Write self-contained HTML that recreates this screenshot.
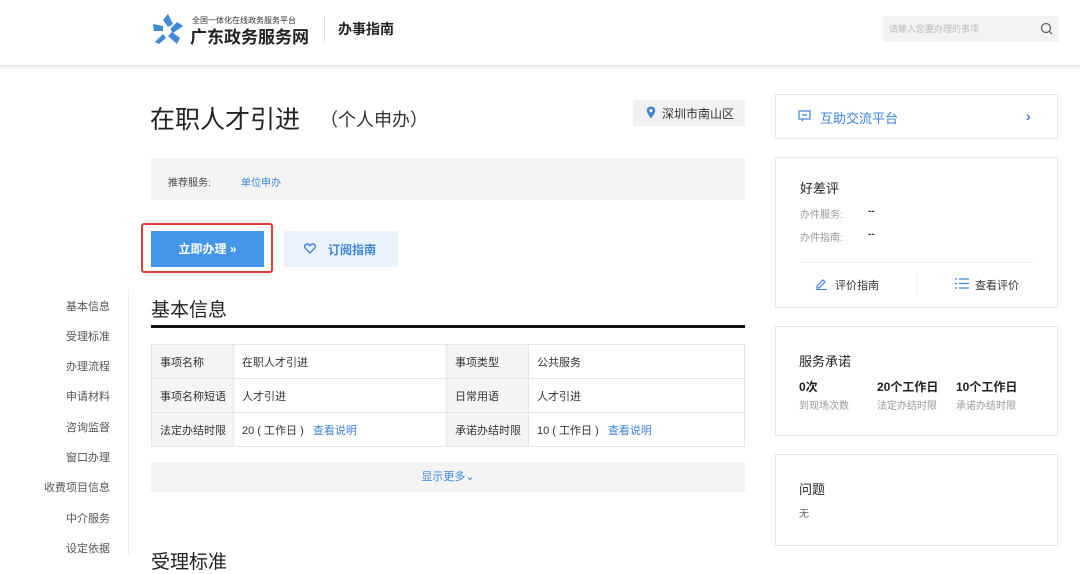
<!DOCTYPE html>
<html><head><meta charset="utf-8"><style>
*{margin:0;padding:0;box-sizing:border-box}
body{width:1080px;height:556px;overflow:hidden;background:#fff;font-family:"Liberation Sans","Noto Sans CJK SC",sans-serif;color:#333;position:relative}
.a{position:absolute;white-space:nowrap}
.hdr{left:0;top:0;width:1080px;height:66px;background:#fff;box-shadow:0 2px 3px rgba(0,0,0,.08);border-bottom:1px solid #e6e6e6}
.nav{font-size:11px;color:#555;right:0;text-align:right;width:80px}
.card{border:1px solid #e8e8e8;background:#fff}
.tbl td{border:1px solid #e6e6e6;font-size:11px;height:34px;padding-left:8px;color:#333}
.tbl td.k{background:#f5f5f5}
.lnk{color:#3d84d8}
</style></head><body>
<div class="a hdr"></div>
<svg class="a" style="left:151px;top:12px" width="34" height="34" viewBox="0 0 34 34">
<g fill="#3d8ad8"><path d="M17 2 L22 12 L17 15 L12 8Z"/><path d="M32 14 L22 21 L19 17 L26 10Z"/><path d="M26 32 L17 24 L21 20 L29 26Z"/><path d="M4 30 L12 22 L15 26 L8 32Z"/><path d="M2 12 L12 14 L12 19 L3 19Z"/></g><circle cx="17" cy="18" r="3" fill="#fff"/></svg>
<div class="a" style="left:192px;top:15px;font-size:8px;color:#333">全国一体化在线政务服务平台</div>
<div class="a" style="left:190px;top:23px;font-size:17px;font-weight:bold;color:#222">广东政务服务网</div>
<div class="a" style="left:324px;top:16px;width:1px;height:26px;background:#e0e0e0"></div>
<div class="a" style="left:338px;top:19px;font-size:14px;font-weight:bold;color:#222">办事指南</div>
<div class="a" style="left:883px;top:16px;width:176px;height:26px;background:#f3f3f3"></div>
<div class="a" style="left:889px;top:22px;font-size:9px;color:#bbb">请输入您要办理的事项</div>
<svg class="a" style="left:1040px;top:22px" width="14" height="14"><circle cx="6" cy="6" r="4.5" fill="none" stroke="#666" stroke-width="1.3"/><path d="M9.5 9.5L12 12" stroke="#666" stroke-width="1.3"/></svg>

<div class="a" style="left:128px;top:290px;width:1px;height:266px;background:#eee"></div>
<div class="a nav" style="top:298px;left:30px">基本信息</div>
<div class="a nav" style="top:328px;left:30px">受理标准</div>
<div class="a nav" style="top:358px;left:30px">办理流程</div>
<div class="a nav" style="top:388px;left:30px">申请材料</div>
<div class="a nav" style="top:419px;left:30px">咨询监督</div>
<div class="a nav" style="top:449px;left:30px">窗口办理</div>
<div class="a nav" style="top:479px;left:30px">收费项目信息</div>
<div class="a nav" style="top:510px;left:30px">中介服务</div>
<div class="a nav" style="top:540px;left:30px">设定依据</div>

<div class="a" style="left:150px;top:100px;font-size:25px;color:#222">在职人才引进</div>
<div class="a" style="left:320px;top:106px;font-size:18px;color:#333">（个人申办）</div>
<div class="a" style="left:633px;top:100px;width:112px;height:26px;background:#f0f1f3"></div>
<svg class="a" style="left:646px;top:106px" width="10" height="13"><path d="M5 0.5C2.5 0.5 0.8 2.3 0.8 4.6 0.8 7.5 5 12.5 5 12.5S9.2 7.5 9.2 4.6C9.2 2.3 7.5 0.5 5 0.5Z" fill="#3d84d8"/><circle cx="5" cy="4.6" r="1.6" fill="#fff"/></svg>
<div class="a" style="left:662px;top:105px;font-size:12px;color:#333">深圳市南山区</div>
<div class="a" style="left:151px;top:158px;width:594px;height:42px;background:#f4f4f5"></div>
<div class="a" style="left:168px;top:174px;font-size:10px;color:#444">推荐服务:</div>
<div class="a lnk" style="left:241px;top:174px;font-size:10px">单位申办</div>

<div class="a" style="left:141px;top:223px;width:132px;height:50px;border:2px solid #e03c3c;border-radius:3px"></div>
<div class="a" style="left:151px;top:231px;width:113px;height:36px;background:#4395ea;color:#fff;font-size:12px;font-weight:bold;text-align:center;line-height:36px">立即办理 »</div>
<div class="a" style="left:284px;top:231px;width:114px;height:36px;background:#eaf3fd"></div>
<svg class="a" style="left:304px;top:243px" width="12" height="11"><path d="M6 10L1.3 5.2C0 3.8 0.8 1 3.2 1 4.5 1 5.4 1.8 6 2.7 6.6 1.8 7.5 1 8.8 1 11.2 1 12 3.8 10.7 5.2Z" fill="none" stroke="#3d84d8" stroke-width="1.4"/></svg>
<div class="a lnk" style="left:328px;top:241px;font-size:12px;font-weight:bold">订阅指南</div>

<div class="a" style="left:151px;top:295px;font-size:19px;color:#222">基本信息</div>
<div class="a" style="left:151px;top:325px;width:594px;height:3px;background:#111"></div>
<table class="a tbl" style="left:151px;top:344px;width:594px;border-collapse:collapse">
<tr><td class="k" style="width:82px">事项名称</td><td style="width:213px">在职人才引进</td><td class="k" style="width:82px">事项类型</td><td>公共服务</td></tr>
<tr><td class="k">事项名称短语</td><td>人才引进</td><td class="k">日常用语</td><td>人才引进</td></tr>
<tr><td class="k">法定办结时限</td><td>20 ( 工作日 ) &nbsp;&nbsp;<span class="lnk">查看说明</span></td><td class="k">承诺办结时限</td><td>10 ( 工作日 ) &nbsp;&nbsp;<span class="lnk">查看说明</span></td></tr>
</table>
<div class="a" style="left:151px;top:462px;width:594px;height:30px;background:#f4f4f5;text-align:center;line-height:30px;font-size:11px" ><span class="lnk">显示更多⌄</span></div>
<div class="a" style="left:151px;top:547px;font-size:19px;color:#222">受理标准</div>

<div class="a card" style="left:775px;top:94px;width:283px;height:45px"></div>
<svg class="a" style="left:798px;top:110px" width="13" height="12"><rect x="1" y="1" width="11" height="8" fill="none" stroke="#3d84d8" stroke-width="1.2"/><path d="M4 5h5M5 9l-1 2" stroke="#3d84d8" stroke-width="1.2"/></svg>
<div class="a lnk" style="left:820px;top:108px;font-size:13px">互助交流平台</div>
<div class="a lnk" style="left:1026px;top:108px;font-size:14px;font-weight:bold">›</div>

<div class="a card" style="left:775px;top:157px;width:283px;height:151px"></div>
<div class="a" style="left:800px;top:178px;font-size:13px;color:#222">好差评</div>
<div class="a" style="left:800px;top:206px;font-size:10px;color:#999">办件服务:</div>
<div class="a" style="left:868px;top:206px;font-size:10px;color:#333;font-weight:bold">--</div>
<div class="a" style="left:800px;top:229px;font-size:10px;color:#999">办件指南:</div>
<div class="a" style="left:868px;top:229px;font-size:10px;color:#333;font-weight:bold">--</div>
<div class="a" style="left:800px;top:262px;width:233px;height:1px;background:#f0f0f0"></div>
<div class="a" style="left:916px;top:272px;width:1px;height:24px;background:#f0f0f0"></div>
<svg class="a" style="left:815px;top:277px" width="13" height="13"><path d="M2 9L8 3 10 5 4 11H2Z" fill="none" stroke="#3d84d8" stroke-width="1.2"/><path d="M1 12.5h11" stroke="#3d84d8"/></svg>
<div class="a" style="left:835px;top:277px;font-size:11px;color:#333">评价指南</div>
<svg class="a" style="left:955px;top:278px" width="14" height="11"><path d="M0 1h2M4 1h10M0 5.5h2M4 5.5h10M0 10h2M4 10h10" stroke="#3d84d8" stroke-width="1.2"/></svg>
<div class="a" style="left:975px;top:277px;font-size:11px;color:#333">查看评价</div>

<div class="a card" style="left:775px;top:326px;width:283px;height:110px"></div>
<div class="a" style="left:799px;top:351px;font-size:13px;color:#222">服务承诺</div>
<div class="a" style="left:799px;top:378px;font-size:12px;font-weight:bold;color:#222">0次</div>
<div class="a" style="left:877px;top:378px;font-size:12px;font-weight:bold;color:#222">20个工作日</div>
<div class="a" style="left:956px;top:378px;font-size:12px;font-weight:bold;color:#222">10个工作日</div>
<div class="a" style="left:799px;top:397px;font-size:10px;color:#999">到现场次数</div>
<div class="a" style="left:877px;top:397px;font-size:10px;color:#999">法定办结时限</div>
<div class="a" style="left:956px;top:397px;font-size:10px;color:#999">承诺办结时限</div>

<div class="a card" style="left:775px;top:454px;width:283px;height:92px"></div>
<div class="a" style="left:799px;top:479px;font-size:13px;color:#222">问题</div>
<div class="a" style="left:799px;top:505px;font-size:10px;color:#666">无</div>
</body></html>
